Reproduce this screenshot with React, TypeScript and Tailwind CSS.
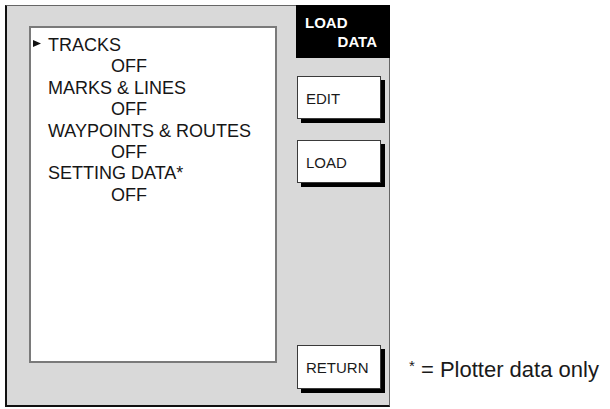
const items = [
  { label: "TRACKS", value: "OFF" },
  { label: "MARKS & LINES", value: "OFF" },
  { label: "WAYPOINTS & ROUTES", value: "OFF" },
  { label: "SETTING DATA*", value: "OFF" },
];

const SoftKey = ({ label, className = "" }: { label: string; className?: string }) => (
  <div
    className={`w-[84px] h-[43px] bg-white border border-[#3a3a3a] shadow-[4px_4px_0_0_#000] flex items-center pl-[8px] pt-[3px] text-[15px] text-[#1a1a1a] ${className}`}
  >
    {label}
  </div>
);

const App = () => {
  return (
    <div
      className="w-[610px] h-[409px] bg-white flex pt-[5px] pl-[5px]"
      style={{ fontFamily: '"Liberation Sans", Arial, sans-serif' }}
    >
      {/* plotter screen */}
      <div className="w-[385px] h-[402px] bg-[#d9d9d9] border-t border-r border-[#666] border-l-2 border-b-2 border-l-[#111] border-b-[#111] flex">
        <div className="ml-[22px] mt-[20px] w-[248px] h-[337px] bg-white border-2 border-[#7a7a7a] pl-[2px] pt-[7px]">
          {items.map((item, i) => (
            <div key={item.label} className="text-[18px] leading-[21.4px] text-[#161616]">
              <div className="flex items-start">
                <div className="w-[15px] shrink-0">
                  {i === 0 && (
                    <svg width="8" height="7" viewBox="0 0 8 7" className="mt-[5px]">
                      <polygon points="0,0 8,3.5 0,7" fill="#111" />
                    </svg>
                  )}
                </div>
                <span>{item.label}</span>
              </div>
              <div className="pl-[78px]">{item.value}</div>
            </div>
          ))}
        </div>

        {/* soft keys */}
        <div className="ml-[19px] w-[94px] -mt-px -mr-px flex flex-col">
          <div className="h-[53px] bg-black text-white font-bold text-[15px] leading-[19px] pt-[8px] px-[9px] flex flex-col">
            <span>LOAD</span>
            <span className="self-end pr-[4px]">DATA</span>
          </div>
          <SoftKey label="EDIT" className="ml-px mt-[18px]" />
          <SoftKey label="LOAD" className="ml-px mt-[21px]" />
          <SoftKey label="RETURN" className="ml-px mt-auto mb-[16px] h-[44px]" />
        </div>
      </div>

      <div className="self-end mb-[28px] ml-[19px] text-[22px] leading-[22px] text-[#1a1a1a] whitespace-nowrap">
        <span className="text-[15px] align-[6px]">*</span> = Plotter data only
      </div>
    </div>
  );
};

export default App;
